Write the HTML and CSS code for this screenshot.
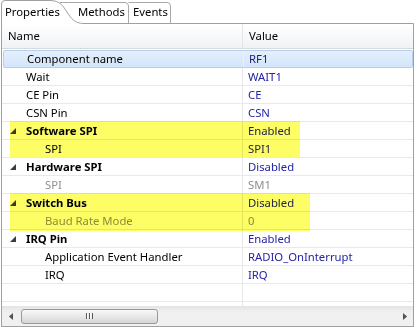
FILE: index.html
```html
<!DOCTYPE html>
<html lang="en">
<head>
  <meta charset="UTF-8" />
  <title>Component Inspector</title>
  <link rel="stylesheet" href="styles.css">
</head>
<body>
  <!-- Tab strip -->
  <div class="tabs">
    <svg class="tab-lines" width="420" height="24" viewBox="0 0 420 24">
      <path d="M60 2.5 H125 Q128.5 2.5 128.5 6 V23.5" fill="none" stroke="#a8a8a8"/>
      <path d="M128.5 2.5 H167 Q170.5 2.5 170.5 6 V23.5" fill="none" stroke="#a8a8a8"/>
      <path d="M1.5 24 V4 Q1.5 0.5 5 0.5 H50 C60 0.5 63 6 67 12 C71 18 74 23.5 84 23.5 H413.5 V24" fill="#fff" stroke="#a0a0a0"/>
    </svg>
    <div class="tab tab-props">Properties</div>
    <div class="tab tab-methods">Methods</div>
    <div class="tab tab-events">Events</div>
  </div>

  <!-- Property grid -->
  <div class="panel">
    <div class="grid-head">
      <div class="head-name">Name</div>
      <div class="head-value">Value</div>
    </div>

    <div class="grid-body">
      <div class="row selected">
        <div class="cell name">Component name</div>
        <div class="cell value">RF1</div>
      </div>
      <div class="row">
        <div class="cell name">Wait</div>
        <div class="cell value">WAIT1</div>
      </div>
      <div class="row">
        <div class="cell name">CE Pin</div>
        <div class="cell value">CE</div>
      </div>
      <div class="row">
        <div class="cell name">CSN Pin</div>
        <div class="cell value">CSN</div>
      </div>
      <div class="row">
        <div class="cell name group"><svg class="exp" width="6" height="6"><polygon points="6,0 6,6 0,6"/></svg>Software SPI</div>
        <div class="cell value">Enabled</div>
      </div>
      <div class="row">
        <div class="cell name child">SPI</div>
        <div class="cell value">SPI1</div>
      </div>
      <div class="row">
        <div class="cell name group"><svg class="exp" width="6" height="6"><polygon points="6,0 6,6 0,6"/></svg>Hardware SPI</div>
        <div class="cell value">Disabled</div>
      </div>
      <div class="row">
        <div class="cell name child muted">SPI</div>
        <div class="cell value muted">SM1</div>
      </div>
      <div class="row">
        <div class="cell name group"><svg class="exp" width="6" height="6"><polygon points="6,0 6,6 0,6"/></svg>Switch Bus</div>
        <div class="cell value">Disabled</div>
      </div>
      <div class="row">
        <div class="cell name child muted">Baud Rate Mode</div>
        <div class="cell value muted">0</div>
      </div>
      <div class="row">
        <div class="cell name group"><svg class="exp" width="6" height="6"><polygon points="6,0 6,6 0,6"/></svg>IRQ Pin</div>
        <div class="cell value">Enabled</div>
      </div>
      <div class="row">
        <div class="cell name child">Application Event Handler</div>
        <div class="cell value">RADIO_OnInterrupt</div>
      </div>
      <div class="row">
        <div class="cell name child">IRQ</div>
        <div class="cell value">IRQ</div>
      </div>
      <div class="row">
        <div class="cell name"></div>
        <div class="cell value"></div>
      </div>
      <div class="row">
        <div class="cell name"></div>
        <div class="cell value"></div>
      </div>

      <!-- highlighter marks -->
      <span class="marker mark-sw"></span>
      <span class="marker mark-bus"></span>
    </div>

    <!-- Horizontal scrollbar -->
    <div class="hscroll">
      <div class="sb-btn"><svg width="4" height="7"><polygon points="4,0 4,7 0,3.5"/></svg></div>
      <div class="sb-track">
        <div class="sb-thumb"><span class="grip"></span></div>
      </div>
      <div class="sb-btn"><svg width="4" height="7"><polygon points="0,0 0,7 4,3.5"/></svg></div>
    </div>
  </div>
</body>
</html>
```

FILE: styles.css
```css
/* ---------- Base ---------- */
* {
  box-sizing: border-box;
}
body {
  margin: 0;
  width: 420px;
  height: 327px;
  overflow: hidden;
  background: #fff;
  color: #000;
  font-family: "Noto Sans", "Open Sans", sans-serif;
  font-size: 11.3px;
}

/* ---------- Tabs ---------- */
.tabs {
  position: relative;
  height: 24px;
  display: flex;
  align-items: center;
}
.tab-lines {
  position: absolute;
  left: 0;
  top: 0;
}
.tab {
  position: relative;
  line-height: 24px;
}
.tab-props {
  padding-left: 5px;
  width: 78px;
}
.tab-methods {
  width: 55px;
}

/* ---------- Panel ---------- */
.panel {
  margin-left: 1px;
  width: 413px;
  height: 303px;
  border: 1px solid #a0a0a0;
  border-top: none;
}

.grid-head {
  display: flex;
  height: 25px;
  border-bottom: 1px solid #d8d9db;
  background: linear-gradient(#ffffff, #f1f2f4);
  line-height: 24px;
}
.head-name {
  width: 241px;
  padding-left: 6px;
  border-right: 1px solid #e4e5e7;
}
.head-value {
  padding-left: 6px;
}

/* ---------- Rows ---------- */
.grid-body {
  position: relative;
  height: 257px;
  overflow: hidden;
  padding-top: 1px;
}
.row {
  display: flex;
  height: 18px;
  border-bottom: 1px solid #e9e9e9;
  line-height: 17px;
}
.row.selected {
  background: linear-gradient(#e4effc, #d3e5fa);
  border: 1px solid #b4cfef;
  border-radius: 2px;
  margin-left: 1px;
  line-height: 16px;
}
.cell {
  white-space: nowrap;
}
.cell.name {
  width: 241px;
  padding-left: 24px;
  border-right: 1px solid #e6e6e6;
  display: flex;
  align-items: center;
}
.row.selected .cell.name {
  width: 240px;
  padding-left: 23px;
  border-right-color: #e9f1fb;
}
.cell.name.child {
  padding-left: 43px;
}
.cell.name.group {
  padding-left: 0;
  font-weight: 700;
}
.exp {
  margin-left: 8px;
  margin-right: 10px;
  fill: #3c3c3c;
}
.cell.value {
  flex: 1;
  padding-left: 5px;
  color: #2424a6;
}
.row.selected .cell.value {
  color: #20207a;
}
.muted,
.cell.value.muted {
  color: #8e8e8e;
}

/* ---------- Highlighter marks ---------- */
.marker {
  position: absolute;
  left: 8px;
  background: #fdfd66;
  mix-blend-mode: multiply;
}
.mark-sw {
  top: 72px;
  width: 290px;
  height: 36px;
}
.mark-bus {
  top: 144px;
  width: 300px;
  height: 38px;
}

/* ---------- Scrollbar ---------- */
.hscroll {
  display: flex;
  height: 20px;
  background: linear-gradient(#e3e3e3, #efefef 25%, #f1f1f1);
}
.sb-btn {
  width: 17px;
  display: flex;
  align-items: center;
  justify-content: center;
  fill: #505050;
}
.sb-track {
  flex: 1;
  display: flex;
  align-items: center;
  padding-left: 2px;
}
.sb-thumb {
  width: 137px;
  height: 15px;
  border: 1px solid #999;
  border-radius: 3px;
  background: linear-gradient(#f7f7f7, #e8e8e8 50%, #d6d6d6);
  display: flex;
  align-items: center;
  justify-content: center;
}
.grip {
  width: 7px;
  height: 6px;
  background: repeating-linear-gradient(90deg, #5a5a5a 0 1px, #fafafa 1px 2px, transparent 2px 3px);
}
```
